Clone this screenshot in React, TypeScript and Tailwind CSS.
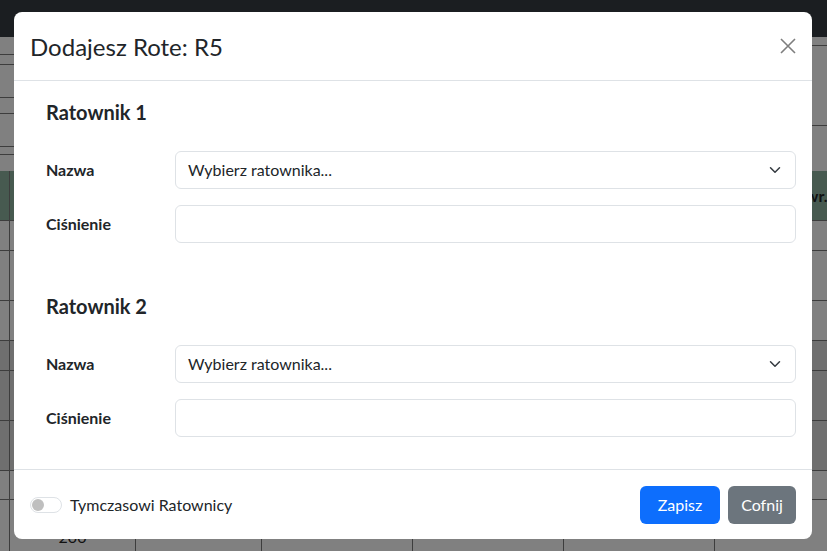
import React from 'react';

const COLS = [9, 126, 126, 151, 151, 151, 113];

// rows of the dimmed table behind the modal
const ROWS = [
  { h: 30, dark: false },
  { h: 50, dark: false },
  { h: 40, dark: false },
  { h: 30, dark: true },
  { h: 50, dark: true },
  { h: 50, dark: true },
  { h: 29, dark: false },
  { h: 52, dark: false, text: '200' },
];

function Cells({ text }: { text?: string }) {
  return (
    <>
      {COLS.map((w, i) => (
        <div
          key={i}
          style={{ width: w }}
          className={`shrink-0 ${i > 0 ? 'border-l border-[#3d3d3d]' : ''}`}
        >
          {i === 1 && text ? (
            <div className="pt-[25px] text-center text-[16px] leading-[24px] text-[#111]">{text}</div>
          ) : null}
        </div>
      ))}
    </>
  );
}

function Background() {
  return (
    <div className="flex h-full flex-col bg-[#808080]">
      <div className="h-[37px] shrink-0 bg-[#1b1e21]" />

      {/* upper part, mostly hidden by the modal */}
      <div className="flex h-[134px] shrink-0">
        <div className="flex w-[14px] flex-col">
          <div className="h-[17px]" />
          <div className="h-[10px] border-t border-[#3d3d3d]" />
          <div className="h-[33px] border-t border-[#3d3d3d]" />
          <div className="h-[16px] border-t border-[#3d3d3d]" />
          <div className="h-[33px] border-t border-[#3d3d3d]" />
          <div className="h-[8px] border-t border-[#3d3d3d]" />
          <div className="flex-1 border-t border-[#3d3d3d]" />
        </div>
        <div className="flex-1" />
        <div className="flex w-[15px] flex-col">
          <div className="h-[8px]" />
          <div className="h-[80px] border-t border-[#3d3d3d]" />
          <div className="flex-1 border-t border-[#3d3d3d]" />
        </div>
      </div>

      {/* green table header */}
      <div className="flex h-[49px] shrink-0 bg-[#475a50]">
        {COLS.map((w, i) => (
          <div
            key={i}
            style={{ width: w }}
            className={`flex shrink-0 items-center overflow-hidden ${i > 0 ? 'border-l border-[#3d3d3d]' : ''}`}
          >
            {i === 6 ? (
              <span className="whitespace-nowrap pl-[72px] text-[16px] font-bold text-[#111]">Powr.</span>
            ) : null}
          </div>
        ))}
      </div>

      {ROWS.map((r, i) => (
        <div
          key={i}
          style={{ height: r.h }}
          className={`flex shrink-0 border-t border-[#3d3d3d] ${r.dark ? 'bg-[#6f6f6f]' : ''}`}
        >
          <Cells text={r.text} />
        </div>
      ))}
    </div>
  );
}

function Chevron() {
  return (
    <svg width="16" height="12" viewBox="0 0 16 16" fill="none">
      <path d="m2 5 6 6 6-6" stroke="#343a40" strokeWidth="2" strokeLinecap="round" strokeLinejoin="round" />
    </svg>
  );
}

function Section({ title, className }: { title: string; className?: string }) {
  return (
    <div className={className}>
      <h5 className="mb-[27px] text-[20px] font-bold leading-[24px]">{title}</h5>
      <div className="flex flex-col gap-4">
        <div className="flex items-center">
          <label className="w-[129px] shrink-0 text-[16px] font-bold">Nazwa</label>
          <div className="flex h-[38px] flex-1 items-center justify-between rounded-[6px] border border-[#dee2e6] pl-3 pr-3 text-[16px]">
            <span>Wybierz ratownika...</span>
            <Chevron />
          </div>
        </div>
        <div className="flex items-center">
          <label className="w-[129px] shrink-0 text-[16px] font-bold">Ciśnienie</label>
          <div className="h-[38px] flex-1 rounded-[6px] border border-[#dee2e6]" />
        </div>
      </div>
    </div>
  );
}

export default function App() {
  return (
    <div className="relative h-[551px] w-[827px] overflow-hidden font-['Lato',sans-serif] text-[#212529]">
      <Background />

      {/* modal dialog */}
      <div className="absolute left-[14px] top-[12px] flex h-[527px] w-[798px] flex-col rounded-[8px] bg-white">
        <div className="flex h-[69px] shrink-0 items-center justify-between border-b border-[#dee2e6] pl-4 pr-4">
          <h4 className="text-[24px] font-normal leading-[29px]">Dodajesz Rote: R5</h4>
          <svg width="16" height="16" viewBox="0 0 16 16" className="opacity-50">
            <path d="M1 1 15 15M15 1 1 15" stroke="#000" strokeWidth="1.6" />
          </svg>
        </div>

        <div className="flex-1 pl-8 pr-4 pt-[19px]">
          <Section title="Ratownik 1" />
          <Section title="Ratownik 2" className="mt-[51px]" />
        </div>

        <div className="flex h-[70px] shrink-0 items-center justify-between border-t border-[#dee2e6] px-4">
          <div className="flex items-center gap-2">
            <span className="flex h-[16px] w-[32px] items-center rounded-full border border-[#dee2e6] pl-[1px]">
              <span className="h-[12px] w-[12px] rounded-full bg-[#bfbfbf]" />
            </span>
            <span className="text-[16px]">Tymczasowi Ratownicy</span>
          </div>
          <div className="flex gap-2">
            <button className="h-[38px] w-[80px] rounded-[6px] bg-[#0d6efd] text-[16px] text-white">Zapisz</button>
            <button className="h-[38px] w-[68px] rounded-[6px] bg-[#6c757d] text-[16px] text-white">Cofnij</button>
          </div>
        </div>
      </div>
    </div>
  );
}
